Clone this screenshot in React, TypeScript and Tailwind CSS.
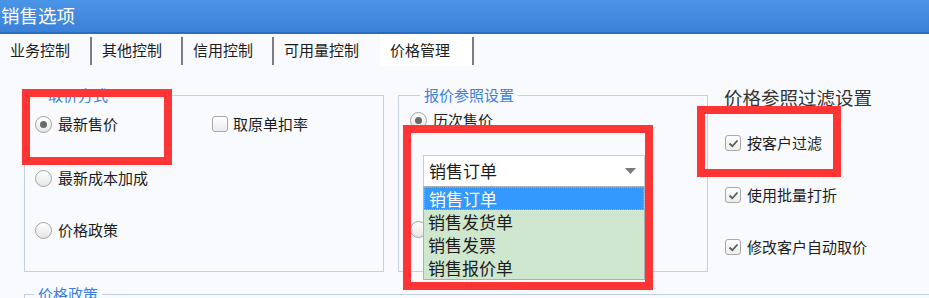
import React from 'react';

const FONT = '"Noto Sans CJK SC", "Noto Sans", sans-serif';

// 单选框
const Radio: React.FC<{ checked?: boolean }> = ({ checked }) => (
  <span className="w-[17px] h-[17px] rounded-full border border-[#a3a3a3] bg-gradient-to-b from-white to-[#e6e6e6] flex items-center justify-center shrink-0">
    {checked && <span className="w-[7px] h-[7px] rounded-full bg-[#6a6a6a]" />}
  </span>
);

// 复选框
const Check: React.FC<{ checked?: boolean }> = ({ checked }) => (
  <span className="w-[16px] h-[16px] rounded-[3px] border border-[#a8a8a8] bg-gradient-to-b from-white to-[#ececec] flex items-center justify-center shrink-0">
    {checked && (
      <svg width="11" height="11" viewBox="0 0 11 11">
        <path d="M1.5 5.5 L4.3 8.3 L9.5 2.5" fill="none" stroke="#5a5a5a" strokeWidth="1.8" />
      </svg>
    )}
  </span>
);

const tabs = [
  { label: '业务控制', w: 'w-[90px]', sep: true },
  { label: '其他控制', w: 'w-[89px]', sep: true },
  { label: '信用控制', w: 'w-[89px]', sep: true },
  { label: '可用量控制', w: 'w-[106px]', sep: false },
  { label: '价格管理', w: 'w-[92px]', sep: true, active: true },
];

const App: React.FC = () => {
  return (
    <div
      className="relative w-[929px] h-[298px] overflow-hidden bg-[#f8fafd] text-[#1c1c1c]"
      style={{ fontFamily: FONT }}
    >
      {/* 标题栏 */}
      <div className="h-[34px] bg-gradient-to-b from-[#4b95e8] to-[#3b80d8] border-b-2 border-[#2c6dc4] flex items-center">
        <span className="text-white text-[18.5px] leading-none pl-[1px] -mt-[2px]">销售选项</span>
      </div>

      {/* 页签 */}
      <div className="h-[32px] flex items-stretch">
        {tabs.map((t) => (
          <div key={t.label} className="flex items-stretch">
            <div
              className={`${t.w} flex items-center text-[15px] ${t.active ? 'bg-white pl-[10px]' : 'pl-[10px]'}`}
            >
              {t.label}
            </div>
            {t.sep && <div className="w-[2px] mt-[3px] mb-[1px] bg-[#7d7d7d]" />}
          </div>
        ))}
      </div>

      {/* 内容区 */}
      <div className="flex items-start pt-[19px]">
        {/* 取价方式 */}
        <fieldset className="ml-[24px] w-[360px] h-[187px] border border-[#c2d1e2] pl-[10px]">
          <legend className="ml-[9px] px-[4px] text-[15px] leading-[20px] text-[#3b7fe0]">取价方式</legend>
          <div className="flex items-center h-[20px] mt-[9px]">
            <div className="w-[177px] flex items-center gap-[6px]">
              <Radio checked />
              <span className="text-[15px]">最新售价</span>
            </div>
            <div className="flex items-center gap-[5px]">
              <Check />
              <span className="text-[15px]">取原单扣率</span>
            </div>
          </div>
          <div className="flex items-center gap-[6px] h-[20px] mt-[34px]">
            <Radio />
            <span className="text-[15px]">最新成本加成</span>
          </div>
          <div className="flex items-center gap-[6px] h-[20px] mt-[32px]">
            <Radio />
            <span className="text-[15px]">价格政策</span>
          </div>
        </fieldset>

        {/* 报价参照设置 */}
        <fieldset className="relative ml-[14px] w-[310px] h-[187px] border border-[#c2d1e2] pl-[11px]">
          <legend className="ml-[10px] px-[4px] text-[15px] leading-[20px] text-[#3b7fe0]">报价参照设置</legend>
          <div className="flex items-center gap-[6px] h-[20px] mt-[5px]">
            <Radio checked />
            <span className="text-[15px]">历次售价</span>
          </div>
          <div className="ml-[13px] mt-[25px] w-[222px] h-[32px] bg-white border border-[#c9cdd4] flex items-center justify-between pl-[5px] pr-[8px]">
            <span className="text-[17px]">销售订单</span>
            <svg width="11" height="6" viewBox="0 0 11 6">
              <path d="M0 0 H11 L5.5 6 Z" fill="#7a7a7a" />
            </svg>
          </div>
          <div className="flex items-center h-[20px] mt-[32px]">
            <Radio />
          </div>

          {/* 下拉列表 */}
          <div className="absolute left-[24px] top-[81px] w-[222px] border border-[#a9b0b8] bg-[#cfe7cf] text-[17px] leading-[23px]">
            <div className="bg-[#3399ff] text-white pl-[4px] border border-dotted border-[#e0a060] leading-[21px]">销售订单</div>
            <div className="pl-[4px]">销售发货单</div>
            <div className="pl-[4px]">销售发票</div>
            <div className="pl-[4px]">销售报价单</div>
          </div>
        </fieldset>

        {/* 价格参照过滤设置 */}
        <div className="ml-[17px] mt-[1px]">
          <div className="text-[18.5px] leading-[22px] text-[#333] -ml-[1px]">价格参照过滤设置</div>
          <div className="flex items-center gap-[6px] h-[20px] mt-[25px]">
            <Check checked />
            <span className="text-[15px]">按客户过滤</span>
          </div>
          <div className="flex items-center gap-[6px] h-[20px] mt-[32px]">
            <Check checked />
            <span className="text-[15px]">使用批量打折</span>
          </div>
          <div className="flex items-center gap-[6px] h-[20px] mt-[32px]">
            <Check checked />
            <span className="text-[15px]">修改客户自动取价</span>
          </div>
        </div>
      </div>

      {/* 价格政策 */}
      <fieldset className="ml-[24px] mt-[12px] w-[920px] h-[40px] border border-[#c2d1e2]">
        <legend className="ml-[9px] px-[4px] text-[15px] leading-[20px] text-[#3b7fe0]">价格政策</legend>
      </fieldset>

      {/* 标注框 */}
      <div className="absolute left-[22px] top-[89px] w-[150px] h-[76px] border-[8px] border-[#ff3535]" />
      <div className="absolute left-[403px] top-[125px] w-[250px] h-[165px] border-[8px] border-[#ff3535]" />
      <div className="absolute left-[697px] top-[106px] w-[144px] h-[71px] border-[8px] border-[#ff3535]" />
    </div>
  );
};

export default App;
